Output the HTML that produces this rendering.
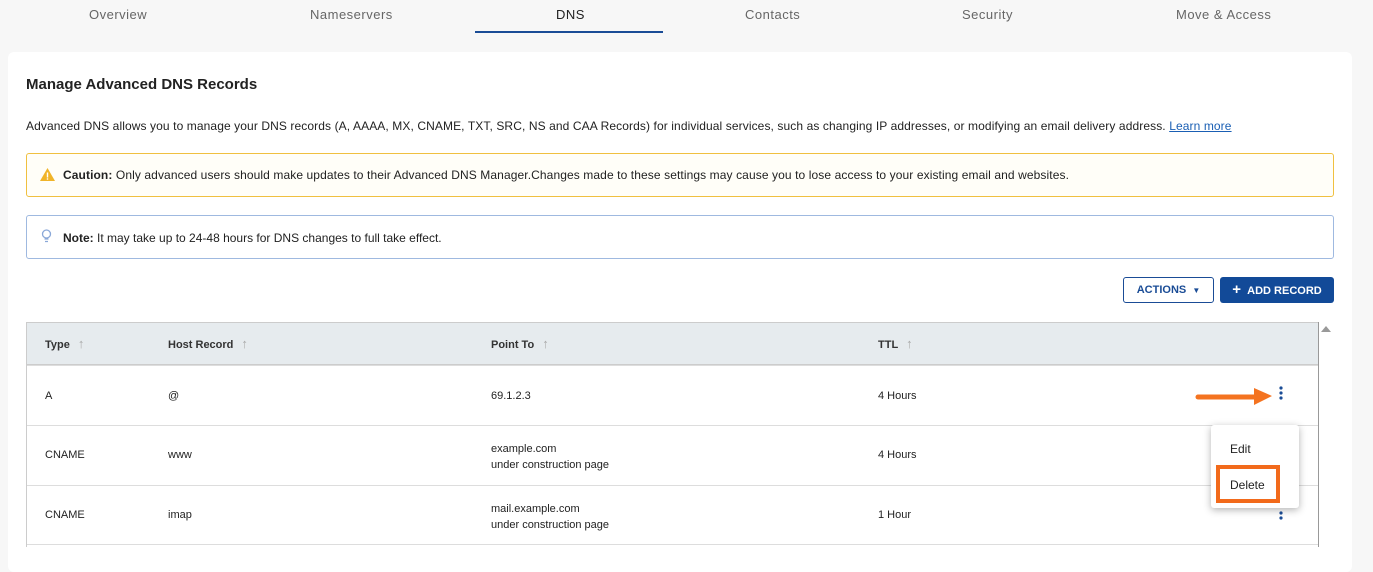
<!DOCTYPE html>
<html><head><style>
body{margin:0;width:1373px;height:547px;overflow:hidden;background:#f7f7f7;font-family:"Liberation Sans",sans-serif;color:#222;position:relative}
.a{position:absolute}
.tab{position:absolute;top:7px;font-size:13px;color:#666;letter-spacing:.5px}
.card{position:absolute;left:8px;top:52px;width:1344px;height:520px;background:#fff;border-radius:6px}
.t{position:absolute;font-size:11px;color:#222}
.h{position:absolute;font-size:11px;font-weight:bold;color:#333;top:336px}
.ar{color:#aaa;font-weight:normal;margin-left:8px;font-size:13px}
</style></head><body>
<div class="tab" style="left:89px">Overview</div>
<div class="tab" style="left:310px">Nameservers</div>
<div class="tab" style="left:556px;color:#222">DNS</div>
<div class="tab" style="left:745px">Contacts</div>
<div class="tab" style="left:962px">Security</div>
<div class="tab" style="left:1176px">Move &amp; Access</div>
<div class="a" style="left:475px;top:31px;width:188px;height:2px;background:#1a4c96"></div>
<div class="card"></div>
<div class="a" style="left:26px;top:76px;font-size:15px;font-weight:bold;color:#222">Manage Advanced DNS Records</div>
<div class="a" style="left:26px;top:119px;font-size:12px;letter-spacing:.1px">Advanced DNS allows you to manage your DNS records (A, AAAA, MX, CNAME, TXT, SRC, NS and CAA Records) for individual services, such as changing IP addresses, or modifying an email delivery address. <span style="color:#1a5fb4;text-decoration:underline">Learn more</span></div>
<div class="a" style="left:26px;top:153px;width:1306px;height:42px;border:1px solid #f0c040;border-radius:3px;background:#fffef8"></div>
<svg class="a" style="left:39px;top:167px" width="17" height="15"><path d="M8.5 1L16 14H1z" fill="#f0b429"/><rect x="7.8" y="5.5" width="1.4" height="5" fill="#fff"/><rect x="7.8" y="11.3" width="1.4" height="1.4" fill="#fff"/></svg>
<div class="a" style="left:63px;top:168px;font-size:12px;letter-spacing:.1px"><b>Caution:</b> Only advanced users should make updates to their Advanced DNS Manager.Changes made to these settings may cause you to lose access to your existing email and websites.</div>
<div class="a" style="left:26px;top:215px;width:1306px;height:42px;border:1px solid #9fb9e0;border-radius:3px"></div>
<svg class="a" style="left:41px;top:229px" width="11" height="15"><circle cx="5.5" cy="5" r="4" fill="none" stroke="#8aa8d8" stroke-width="1.3"/><path d="M3.5 10h4M4 12.5h3" stroke="#8aa8d8" stroke-width="1.3"/></svg>
<div class="a" style="left:63px;top:231px;font-size:12px"><b>Note:</b> It may take up to 24-48 hours for DNS changes to full take effect.</div>
<div class="a" style="left:1123px;top:277px;width:89px;height:24px;border:1px solid #1a4c96;border-radius:3px;font-size:11px;font-weight:bold;color:#1a4c96;line-height:25px;text-align:center">ACTIONS &nbsp;<span style="font-size:8px">▼</span></div>
<div class="a" style="left:1220px;top:277px;width:114px;height:26px;background:#124a98;border-radius:3px;font-size:11px;font-weight:bold;color:#fff;line-height:26px;text-align:center"><span style="font-size:15px">+</span> &nbsp;ADD RECORD</div>
<div class="a" style="left:26px;top:322px;width:1292px;height:41px;background:#e6ebee;border:1px solid #ccc;border-right:none"></div>
<div class="a" style="left:26px;top:363px;width:1px;height:184px;background:#ccc"></div>
<div class="a" style="left:1318px;top:322px;width:1px;height:225px;background:#999"></div>
<div class="a" style="left:1321px;top:326px;width:0;height:0;border-left:5px solid transparent;border-right:5px solid transparent;border-bottom:6px solid #999"></div>
<div class="a" style="left:27px;top:365px;width:1291px;height:1px;background:#ddd"></div>
<div class="a" style="left:27px;top:425px;width:1291px;height:1px;background:#ddd"></div>
<div class="a" style="left:27px;top:485px;width:1291px;height:1px;background:#ddd"></div>
<div class="a" style="left:27px;top:544px;width:1291px;height:1px;background:#ddd"></div>
<div class="h" style="left:45px">Type<span class="ar">↑</span></div>
<div class="h" style="left:168px">Host Record<span class="ar">↑</span></div>
<div class="h" style="left:491px">Point To<span class="ar">↑</span></div>
<div class="h" style="left:878px">TTL<span class="ar">↑</span></div>
<div class="t" style="left:45px;top:390px">A</div><div class="t" style="left:168px;top:390px">@</div><div class="t" style="left:491px;top:390px">69.1.2.3</div><div class="t" style="left:878px;top:390px">4 Hours</div>
<div class="t" style="left:45px;top:449px">CNAME</div><div class="t" style="left:168px;top:449px">www</div><div class="t" style="left:491px;top:441px;line-height:16px">example.com<br>under construction page</div><div class="t" style="left:878px;top:449px">4 Hours</div>
<div class="t" style="left:45px;top:509px">CNAME</div><div class="t" style="left:168px;top:509px">imap</div><div class="t" style="left:491px;top:501px;line-height:16px">mail.example.com<br>under construction page</div><div class="t" style="left:878px;top:509px">1 Hour</div>
<svg class="a" style="left:1278px;top:386px" width="6" height="14"><circle cx="3" cy="2" r="1.6" fill="#1a4c96"/><circle cx="3" cy="7" r="1.6" fill="#1a4c96"/><circle cx="3" cy="12" r="1.6" fill="#1a4c96"/></svg>
<svg class="a" style="left:1278px;top:506px" width="6" height="14"><circle cx="3" cy="7" r="1.6" fill="#1a4c96"/><circle cx="3" cy="12" r="1.6" fill="#1a4c96"/></svg>
<svg class="a" style="left:1194px;top:384px" width="80" height="24"><path d="M4 13H64" stroke="#f47320" stroke-width="5" stroke-linecap="round"/><path d="M60 4L78 12L60 21z" fill="#f47320"/></svg>
<div class="a" style="left:1211px;top:425px;width:88px;height:83px;background:#fff;border-radius:3px;box-shadow:0 2px 8px rgba(0,0,0,.3)"></div>
<div class="a" style="left:1230px;top:442px;font-size:12px">Edit</div>
<div class="a" style="left:1216px;top:465px;width:64px;height:38px;border:4px solid #f26a1b;box-sizing:border-box"></div>
<div class="a" style="left:1230px;top:478px;font-size:12px">Delete</div>
</body></html>
